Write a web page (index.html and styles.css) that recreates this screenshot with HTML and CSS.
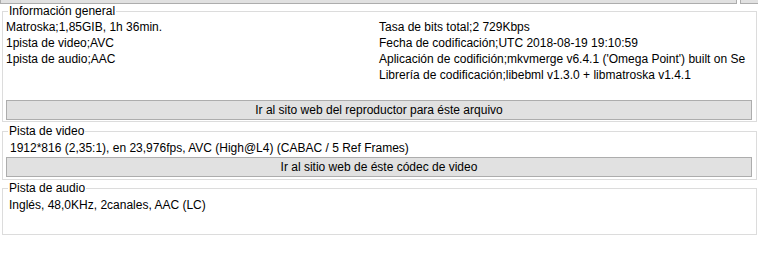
FILE: index.html
```html
<!DOCTYPE html>
<html lang="es">
<head>
  <meta charset="UTF-8" />
  <title>Información del archivo</title>
  <link rel="stylesheet" href="styles.css">
</head>
<body>
  <div class="top-strip">
    <button class="btn btn-wide"></button>
    <button class="btn btn-small"></button>
  </div>

  <fieldset class="group group-general">
    <legend>Información general</legend>
    <div class="info-cols">
      <div class="info-col">
        <div class="line">Matroska;1,85GIB, 1h 36min.</div>
        <div class="line">1pista de video;AVC</div>
        <div class="line">1pista de audio;AAC</div>
      </div>
      <div class="info-col info-right">
        <div class="line">Tasa de bits total;2 729Kbps</div>
        <div class="line">Fecha de codificación;UTC 2018-08-19 19:10:59</div>
        <div class="line">Aplicación de codifición;mkvmerge v6.4.1 ('Omega Point') built on Se</div>
        <div class="line">Librería de codificación;libebml v1.3.0 + libmatroska v1.4.1</div>
      </div>
    </div>
    <button class="btn btn-link">Ir al sito web del reproductor para éste arquivo</button>
  </fieldset>

  <fieldset class="group group-video">
    <legend>Pista de video</legend>
    <div class="line">1912*816 (2,35:1), en 23,976fps, AVC (High@L4) (CABAC / 5 Ref Frames)</div>
    <button class="btn btn-link">Ir al sitio web de éste códec de video</button>
  </fieldset>

  <fieldset class="group group-audio">
    <legend>Pista de audio</legend>
    <div class="line">Inglés, 48,0KHz, 2canales, AAC (LC)</div>
  </fieldset>
</body>
</html>
```

FILE: styles.css
```css
html, body {
  margin: 0;
  background: #fff;
}
body {
  font-family: "Liberation Sans", Arial, sans-serif;
  font-size: 12px;
  color: #000;
  width: 758px;
  height: 270px;
  overflow: hidden;
}

.btn {
  font: inherit;
  color: #000;
  background: #e1e1e1;
  border: 1px solid #adadad;
  margin: 0;
  padding: 0;
}

/* bottom edge of the button row scrolled above */
.top-strip {
  display: flex;
  gap: 3px;
  height: 4px;
  align-items: flex-end;
  overflow: hidden;
}
.top-strip .btn { height: 20px; flex: none; }
.btn-wide { width: 737px; }
.btn-small { width: 20px; }

.group {
  margin: 0 1px 0 2px;
  padding: 0 3px;
  border: 1px solid #dcdcdc;
  min-width: 0;
}
.group legend {
  padding: 0 1px;
  margin-left: 2px;
  line-height: 14px;
}

.line {
  height: 16px;
  line-height: 16px;
  white-space: nowrap;
}

.info-cols {
  display: flex;
  padding-top: 1px;
}
.info-col { width: 373px; flex: none; }
.info-right { flex: 1; width: auto; }

.btn-link {
  display: block;
  width: 746px;
  height: 20px;
  text-align: center;
  line-height: 18px;
}

.group-general { padding-bottom: 1px; }
.group-general .btn-link { margin-top: 17px; }

.group-video { margin-top: 2px; padding-top: 2px; padding-bottom: 2px; }
.group-video .line { padding-left: 4px; }
.group-video .btn-link { margin-top: 1px; }

.group-audio { margin-top: 1px; padding-top: 2px; padding-bottom: 21px; }
.group-audio .line { padding-left: 3px; }
```
